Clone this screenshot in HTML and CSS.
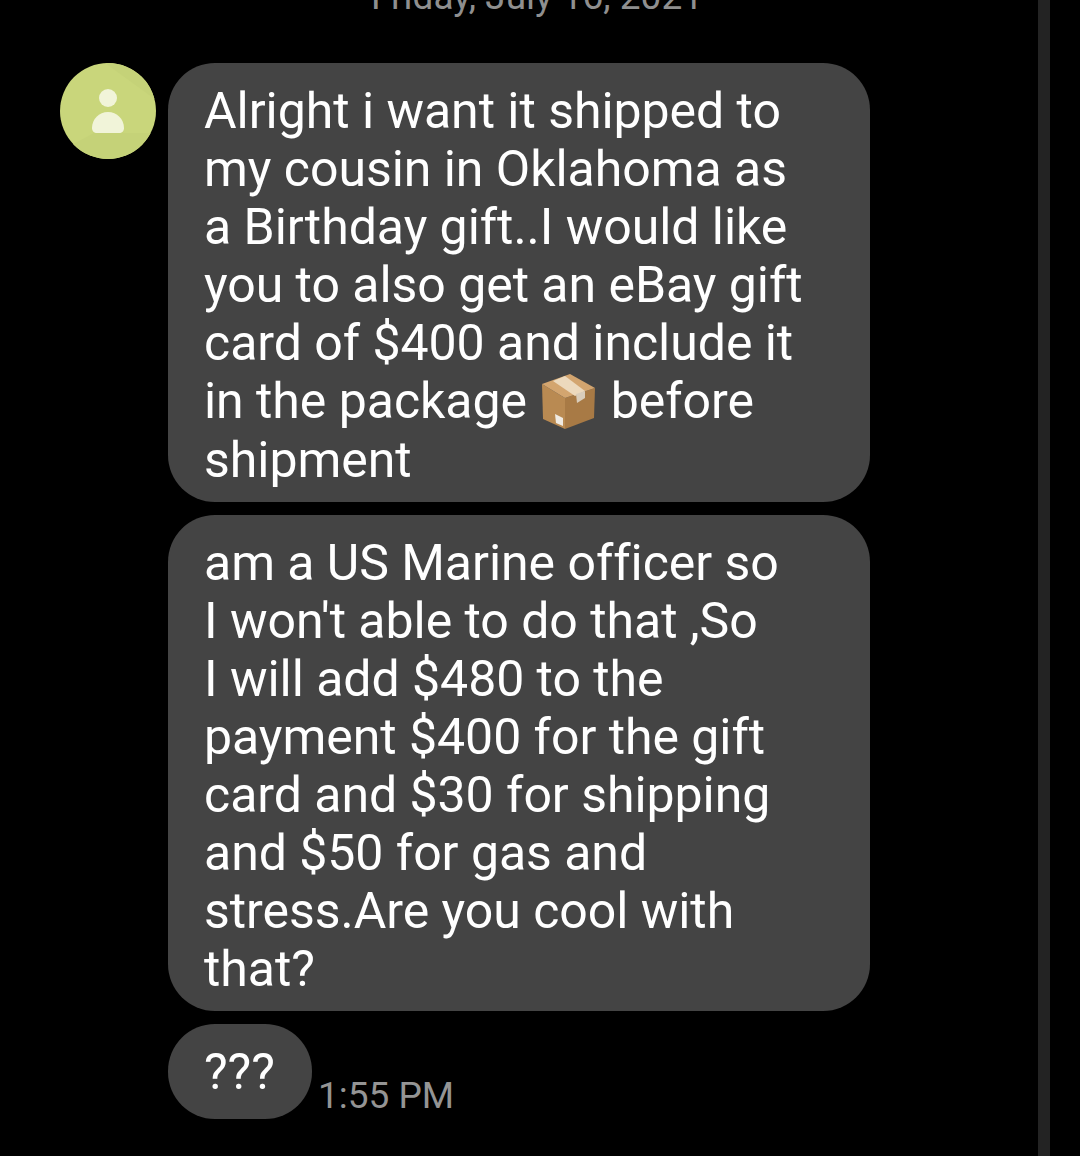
FILE: index.html
```html
<!DOCTYPE html>
<html lang="en">
<head>
  <meta charset="UTF-8">
  <title>Messages</title>
  <link rel="stylesheet" href="styles.css">
</head>
<body>

  <div class="chat">
    <div class="date-line">Friday, July 16, 2021</div>

    <div class="thread">
      <svg class="avatar" viewBox="0 0 96 96" aria-hidden="true">
        <defs>
          <clipPath id="avatar-clip"><circle cx="48" cy="48" r="48"/></clipPath>
        </defs>
        <g clip-path="url(#avatar-clip)">
          <rect width="96" height="96" fill="#c9d67b"/>
          <polygon points="45,0 96,0 96,37" fill="#c5d278"/>
          <polygon points="8,84 43,65 64,70 96,70 96,96 0,96" fill="#c5d278"/>
        </g>
        <circle cx="48" cy="35" r="9" fill="#f1f4d9"/>
        <path d="M32 65 C32 56 39 49 48 49 C57 49 64 56 64 65 C64 68 62 70 59 70 L37 70 C34 70 32 68 32 65 Z" fill="#f1f4d9"/>
      </svg>

      <div class="bubbles">
        <div class="bubble">
          Alright i want it shipped to<br>
          my cousin in Oklahoma as<br>
          a Birthday gift..I would like<br>
          you to also get an eBay gift<br>
          card of $400 and include it<br>
          in the package
          <svg class="box-emoji" viewBox="0 0 60 60" aria-hidden="true">
            <polygon points="2,13 25,27 25,58 3,48" fill="#b98a52"/>
            <polygon points="25,27 55,17 54,47 25,58" fill="#a87a45"/>
            <polygon points="2,13 30,3 55,17 25,27" fill="#d3a56f"/>
            <polygon points="13,10 25,5 45,20 35,25" fill="#ecd9bd"/>
            <polygon points="36,23 45,20 45,27 37,32" fill="#d9cdbb"/>
            <polygon points="15,43 23,47 23,55 16,52" fill="#f0ebe3"/>
          </svg>
          before<br>
          shipment
        </div>
        <div class="bubble">
          am a US Marine officer so<br>
          I won't able to do that ,So<br>
          I will add $480 to the<br>
          payment $400 for the gift<br>
          card and $30 for shipping<br>
          and $50 for gas and<br>
          stress.Are you cool with<br>
          that?
        </div>
        <div class="last-row">
          <div class="bubble bubble-small">???</div>
          <span class="time">1:55 PM</span>
        </div>
      </div>
    </div>
  </div>

  <div class="scrollbar"></div>

</body>
</html>
```

FILE: styles.css
```css
html, body {
  margin: 0;
  padding: 0;
  height: 100%;
}

body {
  font-family: Roboto, "Liberation Sans", sans-serif;
  background-color: #000;
  display: flex;
  height: 1156px;
  overflow: hidden;
}

.chat {
  width: 1038px;
  flex-shrink: 0;
}

.scrollbar {
  width: 12px;
  height: 100%;
  flex-shrink: 0;
  background-color: #232323;
}

.date-line {
  height: 87px;
  margin-top: -24px;
  padding-left: 36px;
  line-height: 42px;
  font-size: 37px;
  text-align: center;
  color: #8f8f8f;
}

.thread {
  display: flex;
  align-items: flex-start;
  gap: 12px;
  padding-left: 60px;
}

.avatar {
  width: 96px;
  height: 96px;
  flex-shrink: 0;
}

.bubbles {
  display: flex;
  flex-direction: column;
  gap: 13px;
}

.bubble {
  width: 702px;
  box-sizing: border-box;
  padding: 19px 36px 13px;
  border-radius: 47px;
  background-color: #444444;
  color: #fff;
  font-size: 50px;
  line-height: 58px;
  letter-spacing: -0.04px;
}

.box-emoji {
  width: 60px;
  height: 60px;
  margin: -2px -2px 0 1px;
  vertical-align: -13px;
}

.last-row {
  display: flex;
  align-items: flex-end;
  gap: 6px;
}

.bubble-small {
  width: 144px;
  height: 95px;
}

.time {
  font-size: 37px;
  line-height: 42px;
  padding-bottom: 2px;
  color: #949494;
}
```
